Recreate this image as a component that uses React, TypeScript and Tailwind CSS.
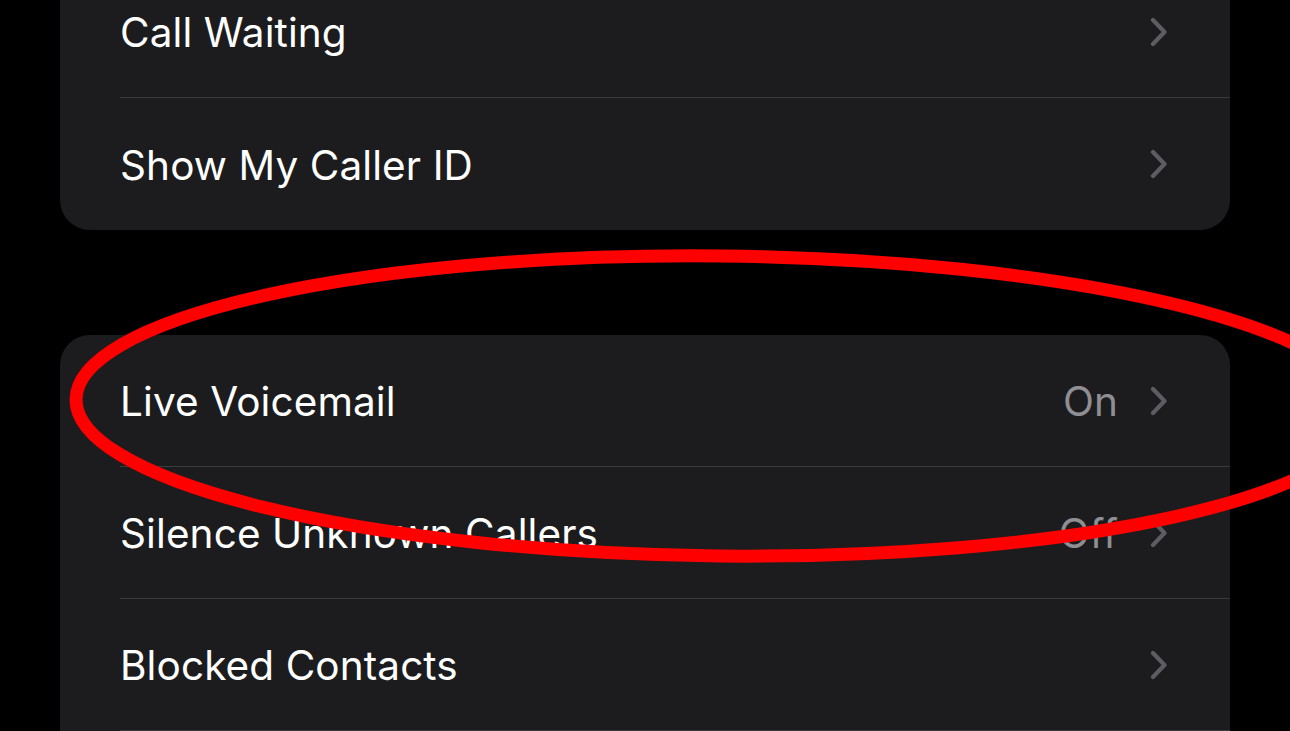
import React from "react";

type Row = { label: string; value?: string };

function Chevron() {
  return (
    <svg width="17" height="30" viewBox="0 0 17 30" className="shrink-0">
      <polyline
        points="3,3 14.5,15 3,27"
        fill="none"
        stroke="#5c5c61"
        strokeWidth="4.2"
        strokeLinecap="round"
        strokeLinejoin="round"
      />
    </svg>
  );
}

function Card({ rows, last }: { rows: Row[]; last?: boolean }) {
  return (
    <div className={`mx-[60px] bg-[#1c1c1e] rounded-[30px] overflow-hidden pl-[60px] ${last ? "rounded-b-none" : ""}`}>
      {rows.map((r, i) => (
        <div
          key={r.label || `row-${i}`}
          className={`h-[132px] flex items-center pr-[63px] ${i < rows.length - 1 || last ? "border-b border-[#3a3a3c]" : ""}`}
        >
          <span className="flex-1 text-white text-[40.5px] tracking-[0.1px] leading-none mt-[4px]">{r.label}</span>
          {r.value && <span className="text-[#8e8e93] text-[40.5px] leading-none mt-[4px] mr-[32px]">{r.value}</span>}
          {r.label && <Chevron />}
        </div>
      ))}
    </div>
  );
}

export default function App() {
  return (
    <div
      className="relative w-[1290px] h-[731px] overflow-hidden bg-black"
      style={{ fontFamily: "Inter, 'Noto Sans', sans-serif" }}
    >
      <div className="-mt-[34px]">
        <Card rows={[{ label: "Call Waiting" }, { label: "Show My Caller ID" }]} />
        <div className="h-[105px]" />
        <Card
          last
          rows={[
            { label: "Live Voicemail", value: "On" },
            { label: "Silence Unknown Callers", value: "Off" },
            { label: "Blocked Contacts" },
            { label: "" },
          ]}
        />
      </div>
      <svg className="absolute inset-0 pointer-events-none" width="1290" height="731" viewBox="0 0 1290 731">
        <ellipse
          cx="720"
          cy="406"
          rx="644"
          ry="150"
          fill="none"
          stroke="#ff0000"
          strokeWidth="13"
          transform="rotate(0.6 720 406)"
        />
      </svg>
    </div>
  );
}
